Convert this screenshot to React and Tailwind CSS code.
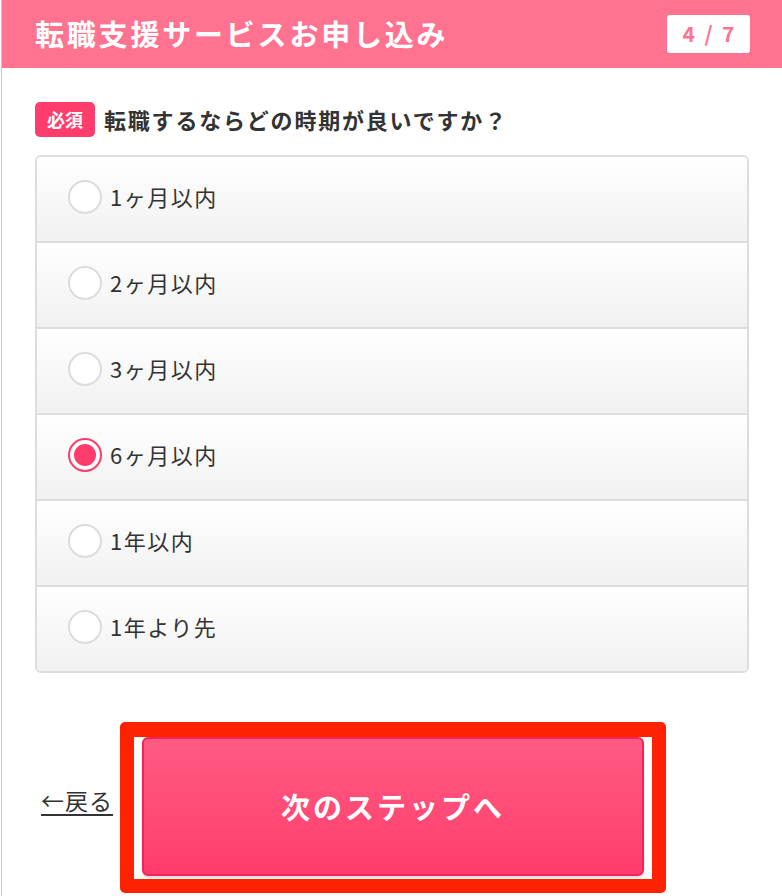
import React, { useState } from "react";

const options = ["1ヶ月以内", "2ヶ月以内", "3ヶ月以内", "6ヶ月以内", "1年以内", "1年より先"];

const jp = { fontFamily: '"Noto Sans CJK JP", "Noto Sans", sans-serif' };

const Radio = ({ checked }) => (
  <span
    className={`flex h-[34px] w-[34px] shrink-0 items-center justify-center rounded-full border-2 bg-white ${
      checked ? "border-[#ff3d6c]" : "border-[#dcdcdc]"
    }`}
  >
    {checked && <span className="h-[22px] w-[22px] rounded-full bg-[#ff3d6c]" />}
  </span>
);

export default function App() {
  const [selected, setSelected] = useState(3);

  return (
    <div className="min-h-[896px] border-l border-[#cccccc] bg-white ml-px" style={jp}>
      {/* Header */}
      <div className="flex h-[68px] items-center justify-between bg-[#ff7391] pl-[33px] pr-[32px]">
        <h1 className="text-[29px] font-bold tracking-[2.8px] text-white">転職支援サービスお申し込み</h1>
        <div className="flex h-[38px] w-[83px] items-center justify-center rounded-[3px] bg-white text-[21px] font-bold text-[#ff7391]">
          4&nbsp;&nbsp;/&nbsp;&nbsp;7
        </div>
      </div>

      <div className="px-[33px] pt-[34px]">
        {/* Question */}
        <div className="flex items-center gap-[9px]">
          <span className="flex h-[35px] w-[60px] items-center justify-center rounded-[5px] bg-[#ff3d6c] text-[18px] font-bold text-white">
            必須
          </span>
          <span className="text-[22px] font-bold tracking-[1.8px] text-[#333333]">
            転職するならどの時期が良いですか？
          </span>
        </div>

        {/* Options */}
        <div className="mt-[18px] overflow-hidden rounded-[6px] border-2 border-[#dddddd]">
          {options.map((opt, i) => (
            <button
              key={opt}
              onClick={() => setSelected(i)}
              className={`flex w-full items-center gap-[8px] bg-gradient-to-b from-white to-[#f1f1f1] pb-[5px] pl-[31px] text-left ${
                i > 0 ? "h-[86px] border-t-2 border-[#dddddd]" : "h-[84px]"
              }`}
            >
              <Radio checked={selected === i} />
              <span className="text-[22px] tracking-[1.5px] text-[#333333]">{opt}</span>
            </button>
          ))}
        </div>

        {/* Footer */}
        <div className="mt-[49px] flex items-center">
          <a href="#" className="mb-[14px] ml-[6px] w-[79px] text-[23px] tracking-[1px] text-[#333333] underline underline-offset-4">
            ←戻る
          </a>
          <div className="rounded-[5px] border-[14px] border-t-[15px] border-[#ff2200] bg-white pb-[3px] pl-[8px] pr-[8px]">
            <button className="flex h-[139px] w-[502px] items-center justify-center rounded-[6px] border-2 border-[#f0245a] bg-gradient-to-b from-[#ff5a82] to-[#ff3c6d] text-[29px] font-bold tracking-[3px] text-white shadow-[0_2px_2px_rgba(0,0,0,0.15)]">
              次のステップへ
            </button>
          </div>
        </div>
      </div>
    </div>
  );
}
